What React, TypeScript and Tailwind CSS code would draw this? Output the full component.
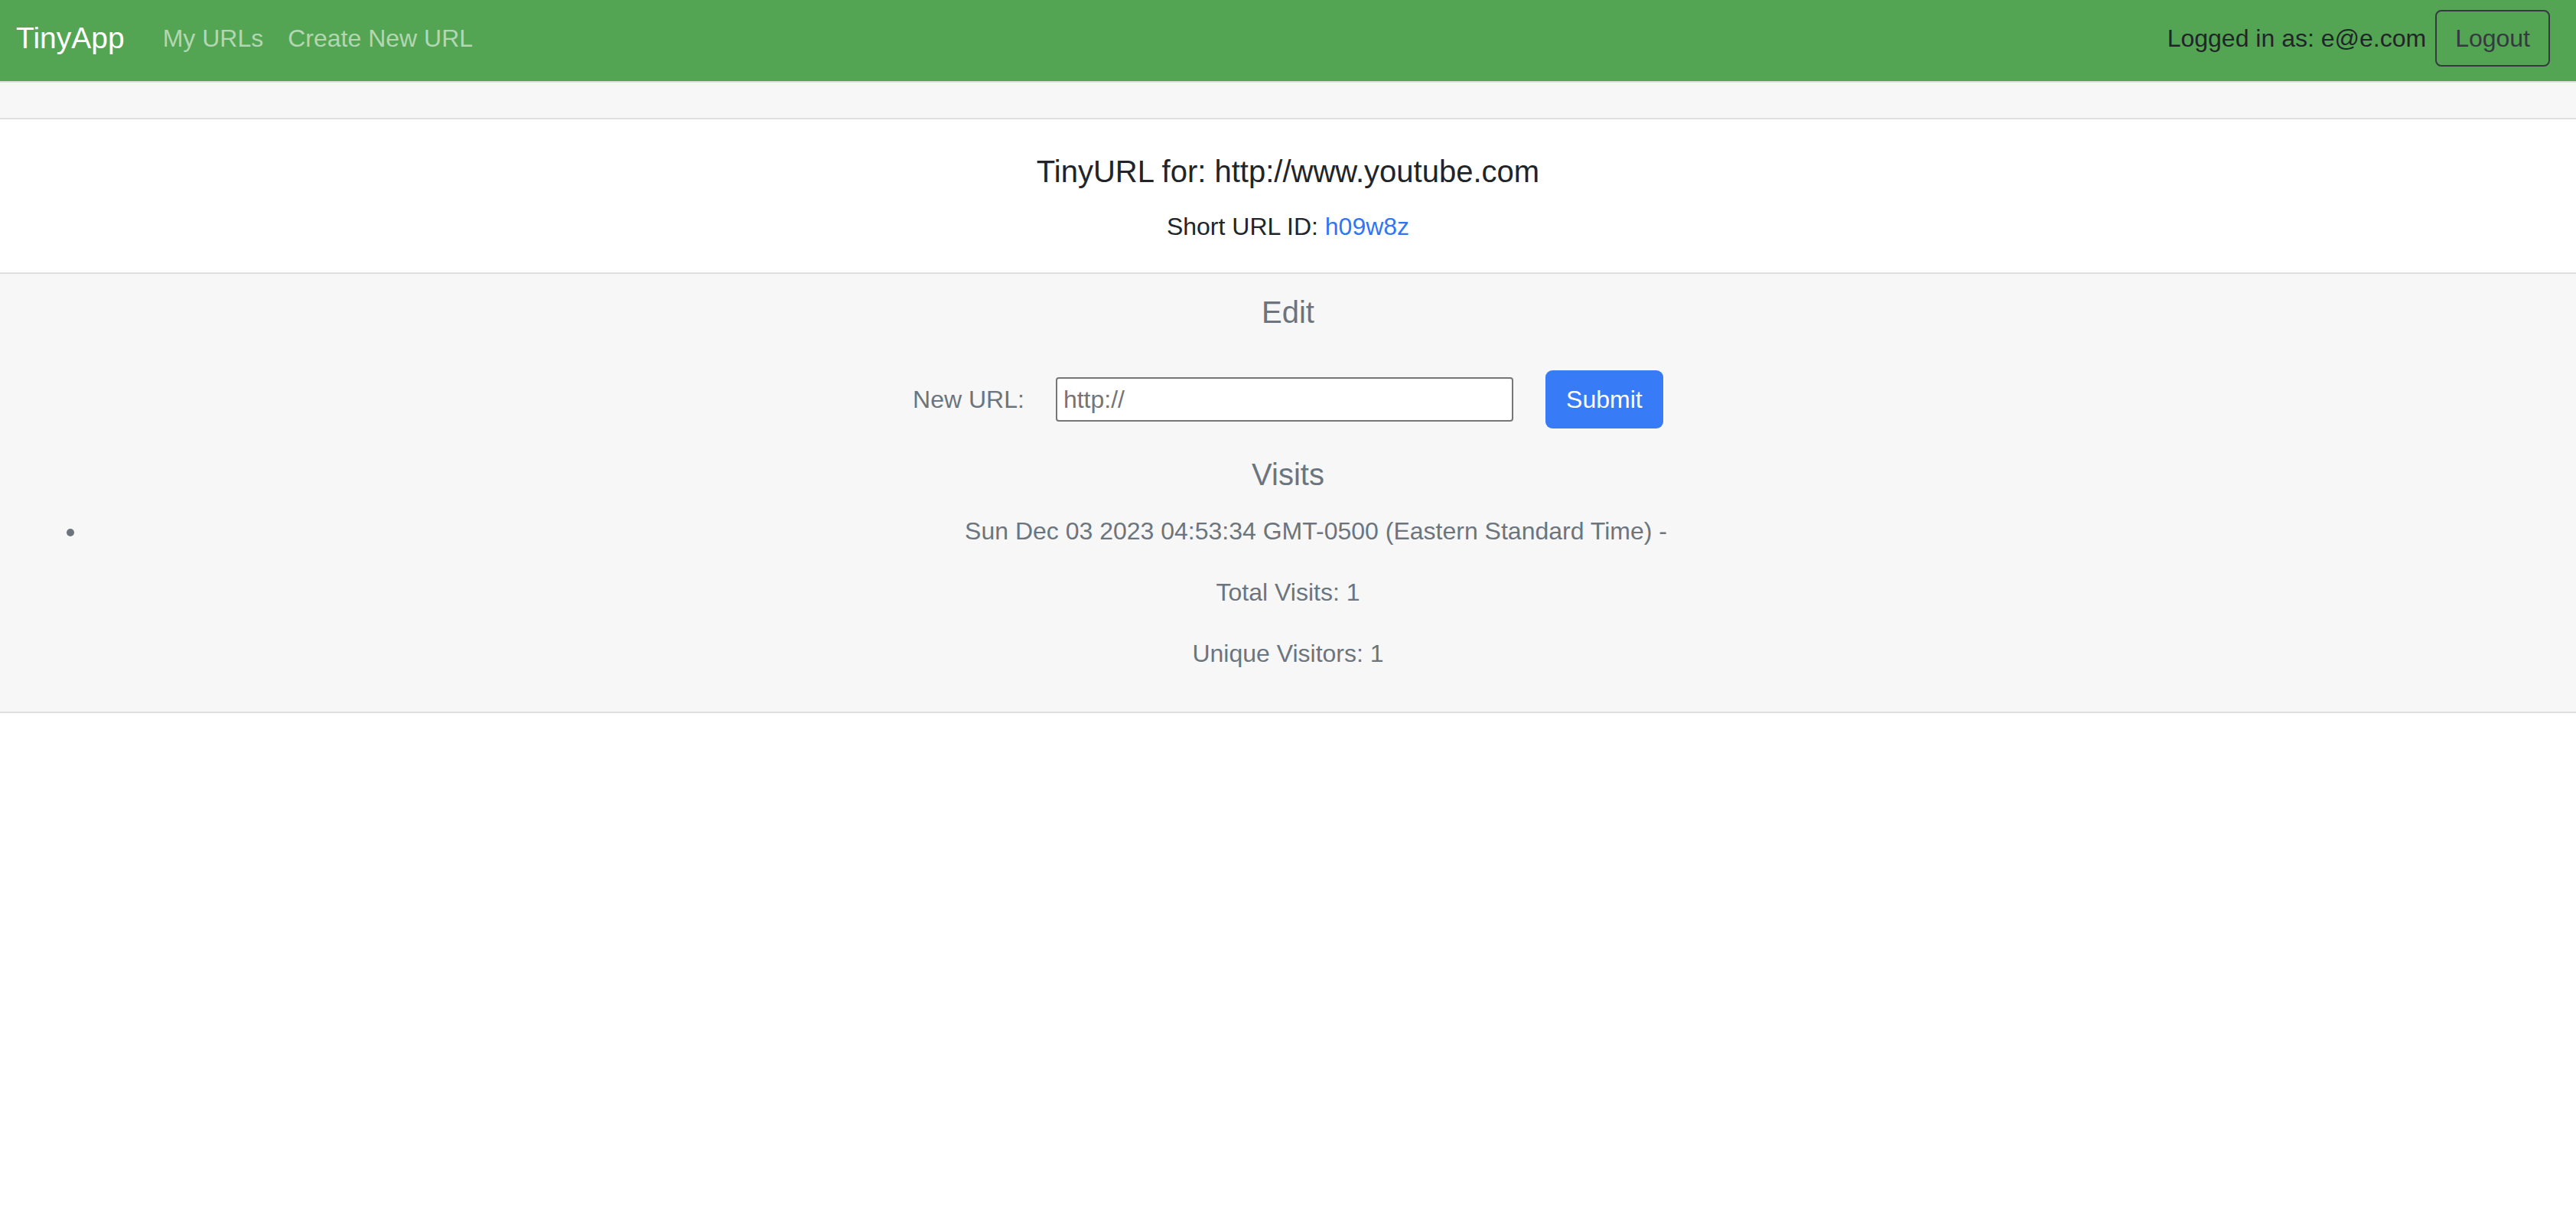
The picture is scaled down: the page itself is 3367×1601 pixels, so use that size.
import React from 'react';

const App = () => {
  const visits = ['Sun Dec 03 2023 04:53:34 GMT-0500 (Eastern Standard Time) -'];

  return (
    <div className="min-h-screen bg-white text-[32px] leading-[48px] text-[#212529] font-['Liberation_Sans',Arial,sans-serif]">
      {/* Navbar */}
      <nav className="flex h-[106px] items-center justify-between bg-[#53a553] pl-[21px] pr-[34px] pt-[13px] pb-[19px]">
        <div className="flex items-center">
          <a className="mr-[34px] text-[39px] leading-[60px] text-white">TinyApp</a>
          <a className="px-[16px] text-[#b2d7b2]">My URLs</a>
          <a className="px-[16px] text-[#b2d7b2]">Create New URL</a>
        </div>
        <div className="flex items-center gap-[12px]">
          <span className="text-[#212529]">Logged in as: e@e.com</span>
          <button className="h-[74px] rounded-[8px] border-2 border-[#343a40] px-[24px] text-[#343a40]">
            Logout
          </button>
        </div>
      </nav>

      {/* Card */}
      <div className="border-y-2 border-[#dfdfdf]">
        <div className="h-[48px] border-b-2 border-[#dfdfdf] bg-[#f7f7f7]"></div>

        <div className="px-[40px] pt-[44px] pb-[36px] text-center">
          <h5 className="mb-[24px] text-[40px] leading-[48px] font-medium">TinyURL for: http://www.youtube.com</h5>
          <p>
            Short URL ID: <a className="text-[#2f76f6]">h09w8z</a>
          </p>
        </div>

        <div className="border-t-2 border-[#dfdfdf] bg-[#f7f7f7] px-[40px] pt-[26px] pb-[20px] text-center text-[#6c757d]">
          <h5 className="text-[40px] leading-[48px] font-medium">Edit</h5>
          <form className="mt-[52px] flex items-center justify-center" onSubmit={(e) => e.preventDefault()}>
            <label className="mr-[41px]">New URL:</label>
            <input
              type="text"
              placeholder="http://"
              className="h-[58px] w-[598px] rounded-[4px] border-2 border-[#767676] bg-white px-[8px] text-[32px] text-[#212529] placeholder:text-[#757575] outline-none"
            />
            <button type="submit" className="ml-[42px] h-[76px] w-[154px] rounded-[9px] bg-[#377bf6] text-white">
              Submit
            </button>
          </form>

          <h5 className="mt-[36px] mb-[26px] text-[40px] leading-[48px] font-medium">Visits</h5>
          <ul className="mb-[32px] list-disc pl-[73px]">
            {visits.map((v, i) => (
              <li key={i}>{v}</li>
            ))}
          </ul>
          <p className="mb-[32px]">Total Visits: 1</p>
          <p className="mb-[32px]">Unique Visitors: 1</p>
        </div>
      </div>
    </div>
  );
};

export default App;
